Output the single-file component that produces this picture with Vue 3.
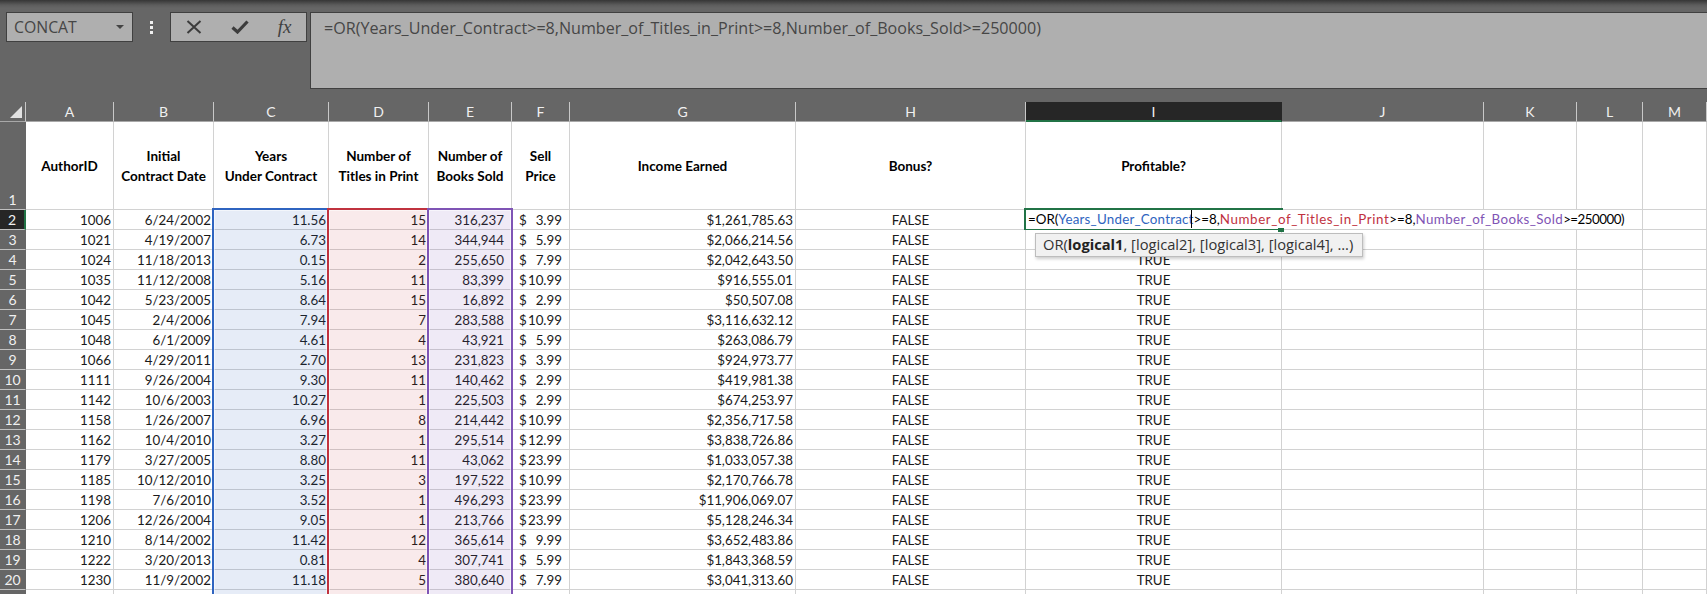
<script setup>
const columns = ['A','B','C','D','E','F','G','H','I','J','K','L','M']
const headers = ['AuthorID','Initial\nContract Date','Years\nUnder Contract','Number of\nTitles in Print','Number of\nBooks Sold','Sell\nPrice','Income Earned','Bonus?','Profitable?','','','','']
const rows = [
  ['1006','6/24/2002','11.56','15','316,237','3.99','$1,261,785.63'],
  ['1021','4/19/2007','6.73','14','344,944','5.99','$2,066,214.56'],
  ['1024','11/18/2013','0.15','2','255,650','7.99','$2,042,643.50'],
  ['1035','11/12/2008','5.16','11','83,399','10.99','$916,555.01'],
  ['1042','5/23/2005','8.64','15','16,892','2.99','$50,507.08'],
  ['1045','2/4/2006','7.94','7','283,588','10.99','$3,116,632.12'],
  ['1048','6/1/2009','4.61','4','43,921','5.99','$263,086.79'],
  ['1066','4/29/2011','2.70','13','231,823','3.99','$924,973.77'],
  ['1111','9/26/2004','9.30','11','140,462','2.99','$419,981.38'],
  ['1142','10/6/2003','10.27','1','225,503','2.99','$674,253.97'],
  ['1158','1/26/2007','6.96','8','214,442','10.99','$2,356,717.58'],
  ['1162','10/4/2010','3.27','1','295,514','12.99','$3,838,726.86'],
  ['1179','3/27/2005','8.80','11','43,062','23.99','$1,033,057.38'],
  ['1185','10/12/2010','3.25','3','197,522','10.99','$2,170,766.78'],
  ['1198','7/6/2010','3.52','1','496,293','23.99','$11,906,069.07'],
  ['1206','12/26/2004','9.05','1','213,766','23.99','$5,128,246.34'],
  ['1210','8/14/2002','11.42','12','365,614','9.99','$3,652,483.86'],
  ['1222','3/20/2013','0.81','4','307,741','5.99','$1,843,368.59'],
  ['1230','11/9/2002','11.18','5','380,640','7.99','$3,041,313.60'],
]
</script>

<template>
  <div class="app">
    <div class="toolbar">
      <div class="namebox">
        <span>CONCAT</span>
        <i class="arrow"></i>
      </div>
      <div class="grip"><i></i><i></i><i></i></div>
      <div class="buttons">
        <svg width="16" height="14" viewBox="0 0 16 14"><path d="M1.5 1 L14.5 13 M14.5 1 L1.5 13" stroke="#3c3c3c" stroke-width="2" fill="none"/></svg>
        <svg width="18" height="14" viewBox="0 0 18 14"><path d="M1.5 7.5 L6.5 12 L16.5 1.5" stroke="#3c3c3c" stroke-width="3.2" fill="none"/></svg>
        <span class="fx">fx</span>
      </div>
      <div class="formula">=OR(Years_Under_Contract&gt;=8,Number_of_Titles_in_Print&gt;=8,Number_of_Books_Sold&gt;=250000)</div>
    </div>

    <div class="sheet">
      <div class="corner">
        <svg width="12" height="12" viewBox="0 0 12 12"><path d="M12 0 V12 H0 Z" fill="#e2e2e2"/></svg>
      </div>
      <div v-for="c in columns" :key="c" class="colhead" :class="{ active: c === 'I' }">{{ c }}</div>

      <div class="rowhead tall">1</div>
      <div v-for="(h, i) in headers" :key="'h' + i" class="cell title">{{ h }}</div>

      <template v-for="(r, ri) in rows" :key="r[0]">
        <div class="rowhead" :class="{ active: ri === 0 }">{{ ri + 2 }}</div>
        <div class="cell num">{{ r[0] }}</div>
        <div class="cell num">{{ r[1] }}</div>
        <div class="cell num">{{ r[2] }}</div>
        <div class="cell num">{{ r[3] }}</div>
        <div class="cell num comma">{{ r[4] }}</div>
        <div class="cell money"><span>$</span><span>{{ r[5] }}</span></div>
        <div class="cell num">{{ r[6] }}</div>
        <div class="cell mid">FALSE</div>
        <div v-if="ri === 0" class="cell editing">
          <div class="editor">
            <div class="entry">=OR(<span class="blue">Years_Under_Contract</span><i class="caret"></i>&gt;=8,<span class="red">Number_of_Titles_in_Print</span>&gt;=8,<span class="purple">Number_of_Books_Sold</span><span class="tail">&gt;=250000)</span></div>
            <i class="handle"></i>
          </div>
          <div class="hint">OR(<b>logical1</b>, [logical2], [logical3], [logical4], ...)</div>
        </div>
        <div v-else class="cell mid">TRUE</div>
        <div class="cell"></div>
        <div class="cell"></div>
        <div class="cell"></div>
        <div class="cell"></div>
      </template>

      <div class="rowhead"></div>
      <div v-for="c in columns" :key="'last' + c" class="cell"></div>

      <div class="range range-c"></div>
      <div class="range range-d"></div>
      <div class="range range-e"></div>
    </div>
  </div>
</template>

<style>
html, body { margin: 0; background: #fff; }
</style>

<style scoped>
.app {
  width: 1707px;
  height: 594px;
  overflow: hidden;
  font-family: "Lato", "Liberation Sans", sans-serif;
  background: #fff;
}
.toolbar {
  height: 102px;
  box-sizing: border-box;
  padding: 12px 0 0 6px;
  display: flex;
  align-items: flex-start;
  background: linear-gradient(#363636 0, #5c5c5c 5px, #666 8px);
  font-family: "Open Sans", "Liberation Sans", sans-serif;
  color: #464646;
}
.namebox {
  width: 127px;
  height: 30px;
  box-sizing: border-box;
  border: 1px solid #404040;
  background: #afafaf;
  display: flex;
  align-items: center;
  justify-content: space-between;
  padding: 0 8px 0 7px;
  font-size: 15.8px;
}
.arrow {
  width: 0;
  height: 0;
  border-left: 4px solid transparent;
  border-right: 4px solid transparent;
  border-top: 4px solid #444;
}
.grip {
  width: 37px;
  height: 30px;
  display: flex;
  flex-direction: column;
  align-items: center;
  justify-content: center;
  gap: 2px;
}
.grip i { width: 3px; height: 3px; background: #f0f0f0; }
.buttons {
  width: 137px;
  height: 30px;
  box-sizing: border-box;
  border: 1px solid #404040;
  background: #afafaf;
  display: flex;
  align-items: center;
  justify-content: space-around;
}
.fx {
  font-family: "Liberation Serif", serif;
  font-style: italic;
  font-size: 19px;
  color: #404040;
}
.formula {
  margin-left: 3px;
  flex: 1;
  height: 77px;
  box-sizing: border-box;
  border: 1px solid #404040;
  border-right: none;
  background: #afafaf;
  padding: 5px 0 0 13px;
  font-size: 16.1px;
  white-space: nowrap;
  line-height: 20px;
}
.sheet {
  position: relative;
  display: grid;
  grid-template-columns: 26px 88px 100px 115px 100px 83px 58px 226px 230px 256px 202px 93px 66px 64px;
  grid-template-rows: 20px 88px repeat(20, 20px);
  font-size: 13.35px;
  color: #1a1a1a;
}
.corner {
  background: #666;
  border-right: 1px solid #c8c8c8;
  border-bottom: 1px solid #a8a8a8;
  box-sizing: border-box;
  padding: 4px 0 0 10px;
  line-height: 0;
}
.colhead {
  background: #666;
  color: #f0f0f0;
  font-size: 14px;
  box-sizing: border-box;
  border-right: 1px solid #c8c8c8;
  border-bottom: 1px solid #a8a8a8;
  display: flex;
  align-items: center;
  justify-content: center;
}
.colhead.active {
  background: #262626;
  border-right-color: #262626;
  border-bottom: 2px solid #217346;
}
.rowhead {
  background: #666;
  color: #f0f0f0;
  font-size: 14px;
  box-sizing: border-box;
  border-right: 1px solid #666;
  border-bottom: 1px solid #c0c0c0;
  display: flex;
  align-items: center;
  justify-content: center;
}
.rowhead.tall { align-items: flex-end; padding-bottom: 1px; }
.rowhead.active {
  background: #262626;
  border-right: 2px solid #217346;
}
.cell {
  box-sizing: border-box;
  border-right: 1px solid #d2d2d2;
  border-bottom: 1px solid #d2d2d2;
  background: #fff;
  padding: 0 2px;
  display: flex;
  align-items: center;
  white-space: nowrap;
}
.title {
  justify-content: center;
  text-align: center;
  font-weight: bold;
  font-size: 13.5px;
  white-space: pre-line;
  line-height: 20px;
  color: #000;
}
.num { justify-content: flex-end; }
.comma { padding-right: 7px; }
.mid { justify-content: center; }
.money { justify-content: space-between; padding: 0 7px 0 7px; }
.editing { position: relative; z-index: 5; }
.editor {
  position: absolute;
  left: -2px;
  top: -2px;
  width: 259px;
  height: 22px;
  box-sizing: border-box;
  border: 2px solid #217346;
  border-right: none;
}
.entry {
  display: inline-block;
  height: 19px;
  line-height: 19px;
  padding: 0 2px 0 2px;
  background: #fff;
  color: #000;
  font-size: 13.35px;
  white-space: nowrap;
}
.blue { color: #2f64c0; letter-spacing: 0.22px; }
.red { color: #c0323f; letter-spacing: 0.58px; }
.purple { color: #7f54b5; letter-spacing: 0.38px; }
.tail { letter-spacing: -0.5px; }
.caret {
  display: inline-block;
  width: 1px;
  height: 18px;
  margin: 0 2px 0 -3px;
  background: #000;
  vertical-align: top;
}
.handle {
  position: absolute;
  right: -1px;
  bottom: -4px;
  width: 6px;
  height: 4px;
  background: #217346;
}
.hint {
  position: absolute;
  left: 9px;
  top: 23px;
  width: 328px;
  height: 24px;
  box-sizing: border-box;
  border: 1px solid #bdbdbd;
  background: #f1f1f1;
  box-shadow: 1px 2px 3px rgba(0, 0, 0, 0.2);
  padding-left: 7px;
  line-height: 21px;
  font-family: "Open Sans", "Liberation Sans", sans-serif;
  font-size: 14.7px;
  color: #333;
}
.hint b { color: #222; }
.range {
  position: absolute;
  left: -2px;
  right: 0;
  top: -2px;
  bottom: 0;
  grid-row: 3 / 23;
  box-sizing: border-box;
  border: 2px solid;
  border-bottom: none;
  z-index: 1;
  pointer-events: none;
  box-shadow: inset 0 0 0 1px rgba(255, 255, 255, 0.5);
}
.range-c { grid-column: 4 / 5; border-color: #2f64c0; background: rgba(47, 100, 192, 0.12); }
.range-d { grid-column: 5 / 6; border-color: #c0323f; background: rgba(192, 50, 63, 0.1); }
.range-e { grid-column: 6 / 7; border-color: #7f54b5; background: rgba(127, 84, 181, 0.12); right: -1px; }
</style>
